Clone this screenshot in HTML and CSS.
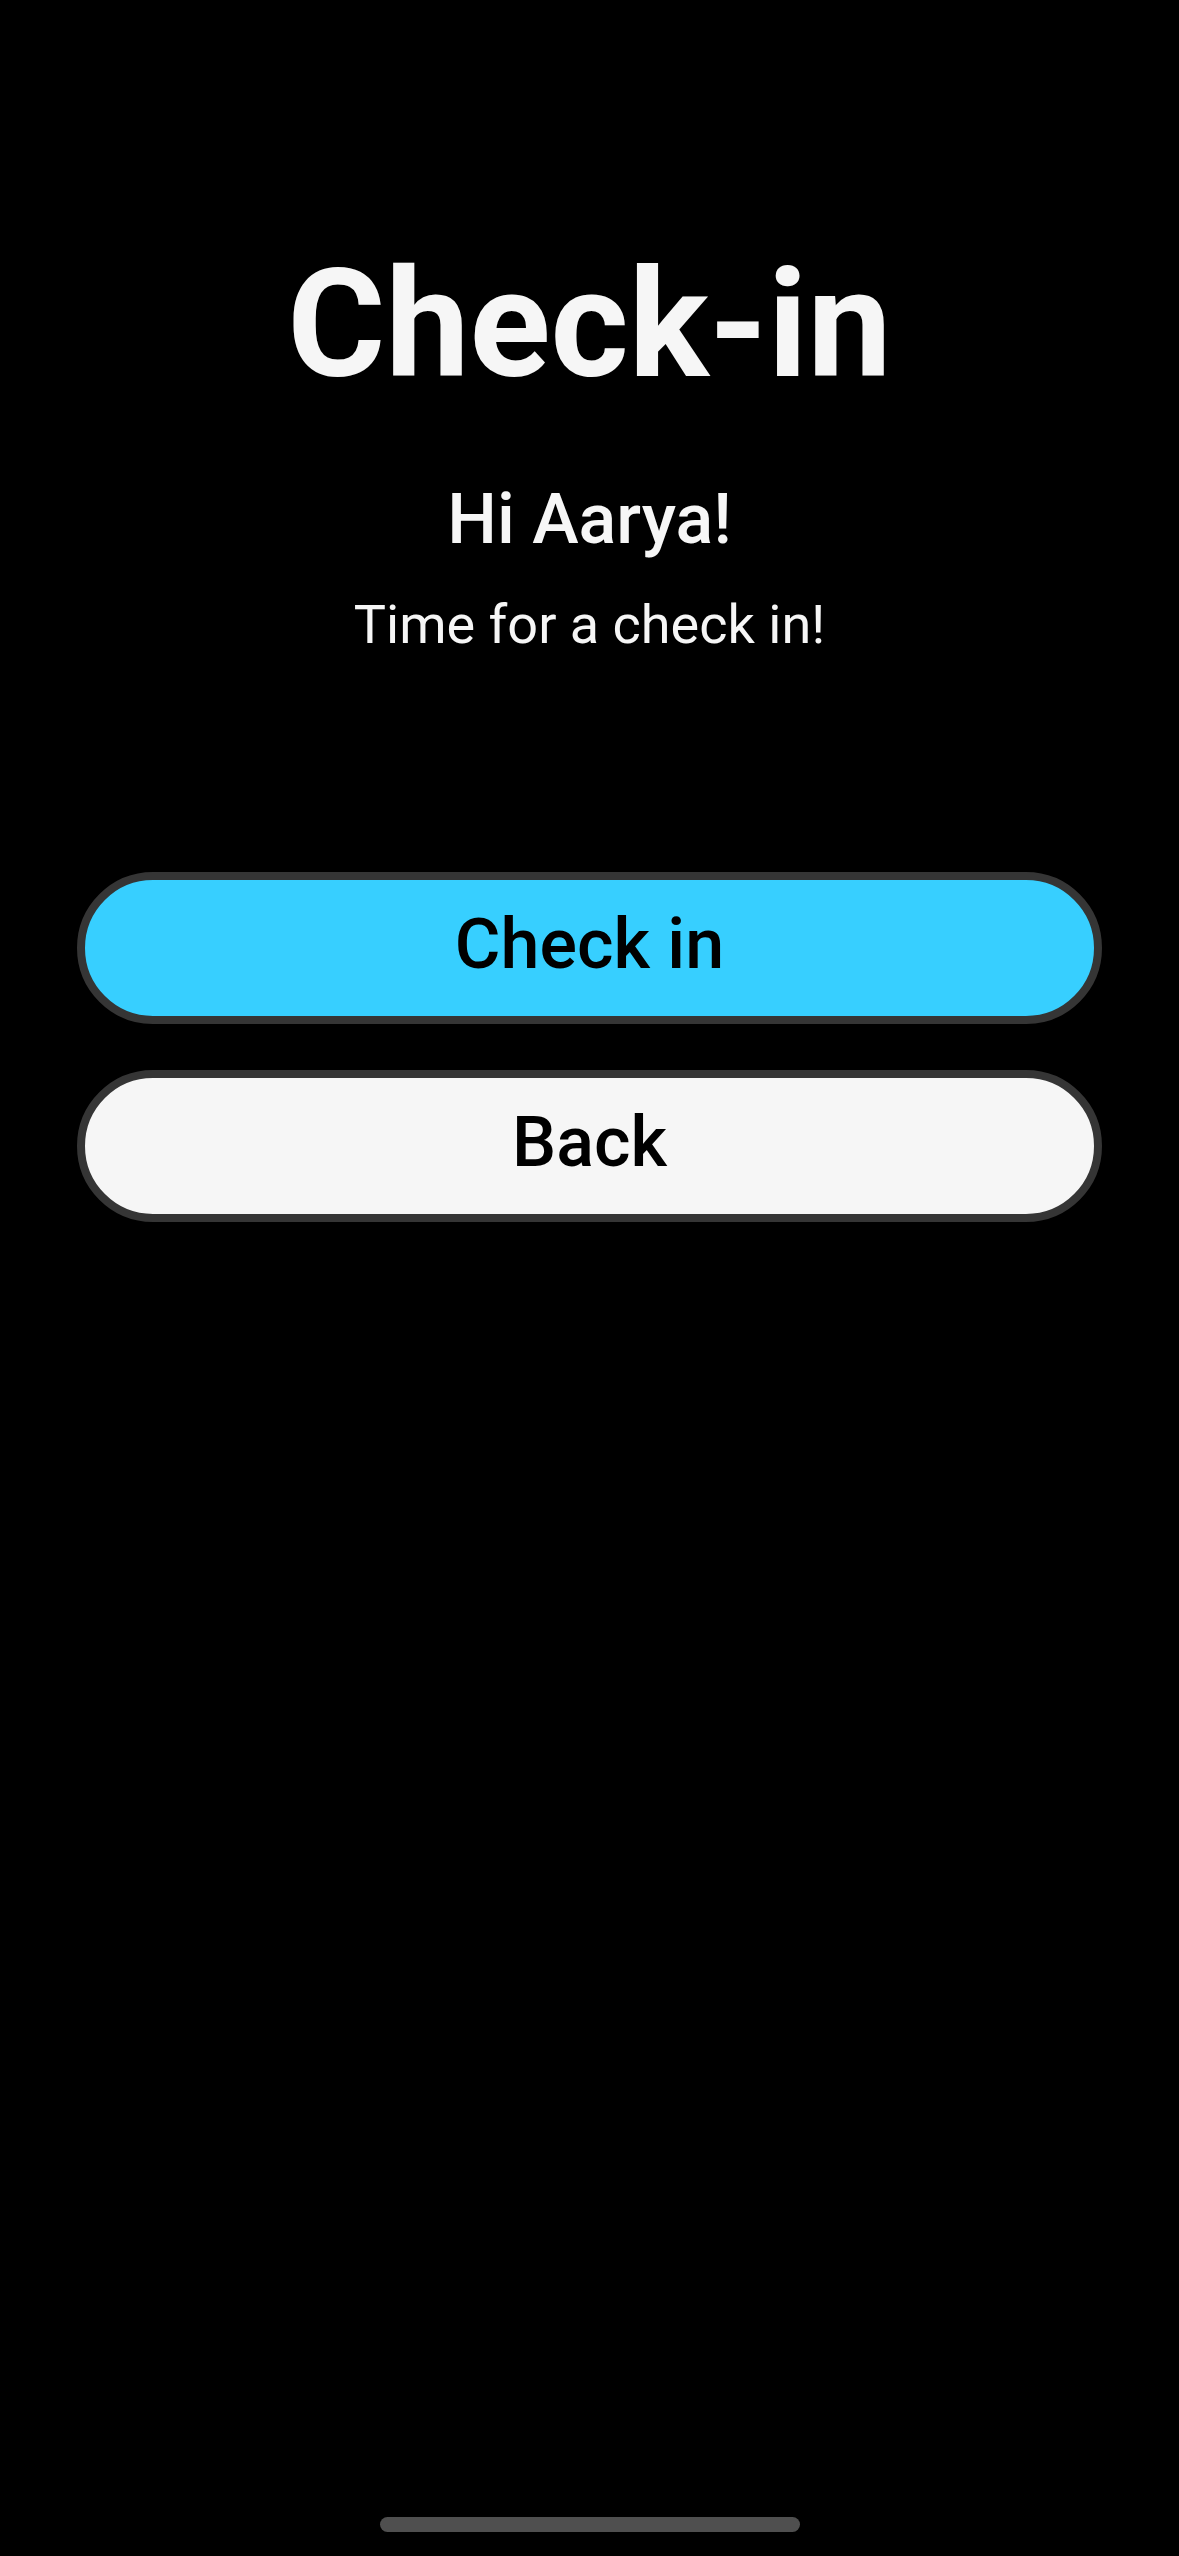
FILE: index.html
```html
<!DOCTYPE html>
<html>
<head>
    <title>Check-in</title>
    <meta name="viewport" content="width=1179">
    <link rel="stylesheet" href="styles.css">
</head>
<body>
<div class="screen">
    <div class="header">
        <h1 class="title">Check-in</h1>
        <h2 class="greeting">Hi Aarya!</h2>
        <p class="prompt">Time for a check in!</p>
    </div>
    <div class="actions">
        <button class="btn btn-primary">Check in</button>
        <button class="btn btn-secondary">Back</button>
    </div>
    <div class="home-bar"></div>
</div>
</body>
</html>
```

FILE: styles.css
```css
html, body {
    margin: 0;
    padding: 0;
    background: #000;
}
.screen {
    display: flex;
    flex-direction: column;
    min-height: 2556px;
    font-family: Roboto, "Noto Sans", sans-serif;
    color: #f6f6f6;
}
.header {
    display: flex;
    flex-direction: column;
    align-items: center;
    padding-top: 250px;
}
.title {
    margin: 0;
    font-size: 150px;
    line-height: 150px;
    font-weight: 700;
}
.greeting {
    margin: 84px 0 0;
    font-size: 70px;
    line-height: 70px;
    font-weight: 500;
}
.prompt {
    margin: 44px 0 0;
    font-size: 54px;
    line-height: 54px;
    font-weight: 400;
}
.actions {
    display: flex;
    flex-direction: column;
    gap: 46px;
    margin: 220px 77px 0;
}
.btn {
    display: block;
    width: 100%;
    box-sizing: border-box;
    border: 8px solid #353535;
    border-radius: 76px;
    padding: 29px 0 37px;
    font-family: inherit;
    font-size: 70px;
    line-height: 70px;
    font-weight: 500;
    color: #000;
    text-align: center;
}
.btn-primary {
    background: #37cfff;
}
.btn-secondary {
    background: #f6f6f6;
}
.home-bar {
    align-self: center;
    width: 420px;
    height: 15px;
    margin-top: auto;
    margin-bottom: 24px;
    border-radius: 8px;
    background: #4f4f4f;
}
```
